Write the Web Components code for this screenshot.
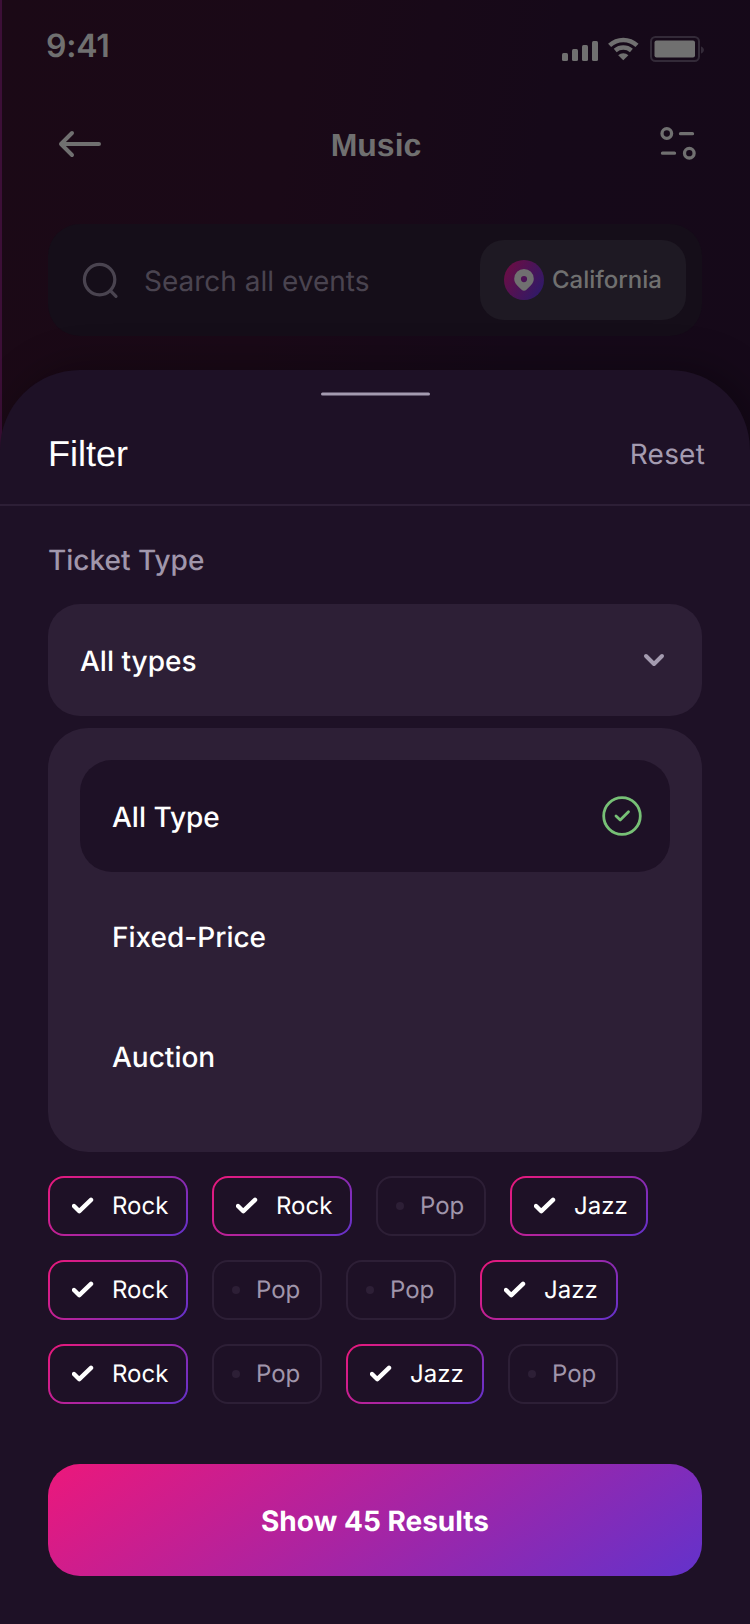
<!DOCTYPE html>
<html lang="en">
<head>
<meta charset="utf-8">
<title>Music events filter</title>
<style>
  html, body { margin: 0; padding: 0; }
  body { width: 750px; height: 1624px; overflow: hidden; background: #1e1126; font-family: Inter, "Liberation Sans", sans-serif; text-rendering: geometricPrecision; -webkit-font-smoothing: antialiased; }
</style>
</head>
<body>
<music-app></music-app>
<script>
const define = (name, markup) => {
  const template = document.createElement('template');
  template.innerHTML = markup;
  customElements.define(name, class extends HTMLElement {
    constructor() {
      super();
      this.attachShadow({ mode: 'open' }).append(template.content.cloneNode(true));
    }
  });
};

define('status-bar', `
<style>
  :host { display: flex; justify-content: space-between; height: 90px; padding: 0 46px 0 46px; color: #707070; }
  .time { font-size: 32px; font-weight: 600; line-height: 40px; margin-top: 26px; letter-spacing: -.2px; }
  svg { display: block; margin-top: 34px; }
</style>
<div class="time">9:41</div>
<svg width="144" height="30" viewBox="560 34 144 30" fill="#707070">
  <rect x="562" y="53" width="6" height="8" rx="1.5"/>
  <rect x="572" y="49" width="6" height="12" rx="1.5"/>
  <rect x="582" y="45" width="6" height="16" rx="1.5"/>
  <rect x="592" y="41" width="6" height="20" rx="1.5"/>
  <g fill="none" stroke="#707070" stroke-width="4.5">
    <path d="M609.6 45.4A20 20 0 0 1 637 45.4"/>
    <path d="M615.2 50.4A12.8 12.8 0 0 1 631.4 50.4"/>
  </g>
  <path d="M618.2 55.2A7.4 7.4 0 0 1 628.4 55.2L623.3 60.3z"/>
  <rect x="651" y="37" width="48" height="24" rx="4.5" fill="none" stroke="#332a38" stroke-width="2"/>
  <rect x="654.5" y="40.5" width="40.5" height="17" rx="2"/>
  <path d="M701 46.5v7c3.9-1.2 3.9-5.8 0-7z" fill="#332a38"/>
</svg>`);

define('page-header', `
<style>
  :host { display: grid; grid-template-columns: 48px 1fr 48px; align-items: center; height: 108px; padding: 0 48px 0 56px; color: #707070; }
  .title { font: bold 32px/40px "Liberation Sans", Arial, sans-serif; text-align: center; padding-right: 6px; padding-top: 2px; }
  svg { display: block; }
</style>
<svg width="48" height="48" viewBox="56 120 48 48" fill="none" stroke="#707070" stroke-width="4" stroke-linecap="round" stroke-linejoin="round"><path d="M99 144H61M72 133L61 144l11 11"/></svg>
<div class="title"><slot></slot></div>
<svg width="48" height="48" viewBox="654 120 48 48" fill="none" stroke="#707070" stroke-width="3.3" stroke-linecap="round"><circle cx="666.8" cy="133.5" r="4.8"/><path d="M680.5 133.7h12M662.5 153.2h12"/><circle cx="689.3" cy="153.2" r="4.8"/></svg>`);

define('location-pill', `
<style>
  :host { display: flex; align-items: center; box-sizing: border-box; width: 206px; height: 80px; padding-left: 24px; gap: 8px; border-radius: 24px; background: #1e1923; color: #707070; font-size: 24px; font-weight: 500; }
  svg { display: block; flex: none; }
  span { padding-bottom: 2px; }
</style>
<svg width="40" height="40" viewBox="0 0 40 40">
  <defs><linearGradient id="pin" x1="0" y1="0" x2="1" y2=".6"><stop offset="0" stop-color="#720c40"/><stop offset="1" stop-color="#321966"/></linearGradient></defs>
  <circle cx="20" cy="20" r="20" fill="url(#pin)"/>
  <path fill="#707070" fill-rule="evenodd" d="M20 9a9.8 9.8 0 0 1 9.8 9.8c0 4.7-4 7.6-7.4 10.9-1.4 1.3-3.4 1.3-4.8 0C14.2 26.4 10.2 23.5 10.2 18.8A9.8 9.8 0 0 1 20 9zm0 7a3.1 3.1 0 1 0 0 6.2 3.1 3.1 0 0 0 0-6.2z"/>
</svg>
<span><slot></slot></span>`);

define('search-bar', `
<style>
  :host { display: flex; align-items: center; box-sizing: border-box; width: 654px; height: 112px; margin: 26px 48px 0; padding: 0 16px 0 32px; border-radius: 32px; background: #150e19; color: #4a4450; font-size: 28px; }
  svg { display: block; flex: none; margin-right: 16px; }
  .hint { flex: 1; padding-top: 2px; }
</style>
<svg width="48" height="48" viewBox="80 256 48 48" fill="none" stroke="#4a4450" stroke-width="3.2" stroke-linecap="round"><circle cx="99.6" cy="279.6" r="15.2"/><path d="M110.6 290.8l5.4 5.6"/></svg>
<div class="hint">Search all events</div>
<slot></slot>`);

define('select-field', `
<style>
  :host { display: flex; align-items: center; justify-content: space-between; box-sizing: border-box; height: 112px; padding: 2px 24px 0 32px; border-radius: 32px; background: #2d1f36; color: #fff; font-size: 28px; font-weight: 500; }
  svg { display: block; }
</style>
<slot></slot>
<svg width="48" height="48" viewBox="0 0 48 48" fill="none" stroke="#a49bb0" stroke-width="4" stroke-linecap="round" stroke-linejoin="round"><path d="M16 19l8 8 8-8"/></svg>`);

define('option-item', `
<style>
  :host { display: flex; align-items: center; justify-content: space-between; box-sizing: border-box; height: 112px; padding: 2px 28px 0 32px; border-radius: 32px; color: #fff; font-size: 28px; font-weight: 500; }
  :host([selected]) { background: #1e1126; }
  svg { display: none; }
  :host([selected]) svg { display: block; margin-top: -2px; }
</style>
<slot></slot>
<svg width="40" height="40" viewBox="0 0 40 40" fill="none" stroke="#77c076" stroke-width="2.8" stroke-linecap="round" stroke-linejoin="round"><circle cx="20" cy="20" r="18.3"/><path d="M14 20l4.2 4 8.3-8.3"/></svg>`);

define('option-list', `
<style>
  :host { display: flex; flex-direction: column; gap: 8px; box-sizing: border-box; height: 424px; margin-top: 12px; padding: 32px; border-radius: 40px; background: #2d1f36; }
</style>
<slot></slot>`);

define('genre-chip', `
<style>
  :host { display: flex; align-items: center; box-sizing: border-box; width: 110px; height: 60px; padding: 0 0 2px 18px; border: 2px solid #2d1f36; border-radius: 16px; color: #a096ab; font-size: 24px; font-weight: 400; }
  .dot { width: 8px; height: 8px; border-radius: 50%; background: #2d1f36; margin: 2px 16px 0 0; }
  svg { display: none; }
  :host([on]) { width: 140px; padding-left: 22px; border-color: transparent; color: #fff;
    background: linear-gradient(#1e1126, #1e1126) padding-box, linear-gradient(135deg, #ec187b, #6332cb) border-box; }
  :host([on=jazz]) { width: 138px; }
  :host([on]) svg { display: block; margin: 2px 16px 0 0; }
  :host([on]) .dot { display: none; }
</style>
<span class="dot"></span>
<svg width="24" height="24" viewBox="0 0 24 24" fill="none" stroke="#fff" stroke-width="4.4" stroke-linecap="round" stroke-linejoin="round"><path d="M2 12l5.300 5.200L19 5.900"/></svg>
<slot></slot>`);

define('chip-row', `
<style>:host { display: flex; gap: 24px; margin-top: 24px; }</style>
<slot></slot>`);

define('primary-button', `
<style>
  :host { display: flex; align-items: center; justify-content: center; box-sizing: border-box; height: 112px; margin-top: 60px; padding-top: 2px; border-radius: 32px; color: #fff; font-size: 28px; font-weight: 700; background: linear-gradient(145deg, #ec187b 0%, #a824a3 50%, #6332cb 100%); }
</style>
<slot></slot>`);

define('filter-sheet', `
<style>
  :host { display: block; box-sizing: border-box; height: 1254px; border-radius: 80px 80px 0 0; background: #1e1126; box-shadow: 8px -4px 40px rgba(0,0,0,.3); }
  .grip { width: 109px; height: 3px; border-radius: 2px; background: #a49bb0; margin: 0 0 0 320.5px; transform: translateY(22.5px); }
  header { display: flex; align-items: center; justify-content: space-between; box-sizing: border-box; height: 133px; padding: 31px 45px 0 48px; border-bottom: 2px solid #2d1f36; }
  .title { font: 36px/44px "Liberation Sans", Arial, sans-serif; color: #fff; }
  .reset { font-size: 28px; color: #a49bb0; letter-spacing: .2px; }
  .body { padding: 0 48px; }
  .label { height: 98px; line-height: 108px; font-size: 28px; font-weight: 500; color: #a096ab; }
</style>
<div class="grip"></div>
<header><div class="title">Filter</div><div class="reset">Reset</div></header>
<div class="body">
  <div class="label">Ticket Type</div>
  <slot></slot>
</div>`);

define('music-app', `
<style>
  :host { display: block; box-sizing: border-box; width: 750px; height: 1624px; overflow: hidden; background: linear-gradient(#3c0f37, #3c0f37) 0 0 / 2px 100% no-repeat, linear-gradient(100deg, #1b0916 0, #1a0917 30%, #160919 55%, #150919 100%); }
  .top { height: 370px; }
</style>
<div class="top">
  <status-bar></status-bar>
  <page-header>Music</page-header>
  <search-bar><location-pill>California</location-pill></search-bar>
</div>
<filter-sheet>
  <select-field>All types</select-field>
  <option-list>
    <option-item selected>All Type</option-item>
    <option-item>Fixed-Price</option-item>
    <option-item>Auction</option-item>
  </option-list>
  <chip-row><genre-chip on>Rock</genre-chip><genre-chip on>Rock</genre-chip><genre-chip>Pop</genre-chip><genre-chip on="jazz">Jazz</genre-chip></chip-row>
  <chip-row><genre-chip on>Rock</genre-chip><genre-chip>Pop</genre-chip><genre-chip>Pop</genre-chip><genre-chip on="jazz">Jazz</genre-chip></chip-row>
  <chip-row><genre-chip on>Rock</genre-chip><genre-chip>Pop</genre-chip><genre-chip on="jazz">Jazz</genre-chip><genre-chip>Pop</genre-chip></chip-row>
  <primary-button>Show 45 Results</primary-button>
</filter-sheet>`);
</script>
</body>
</html>
